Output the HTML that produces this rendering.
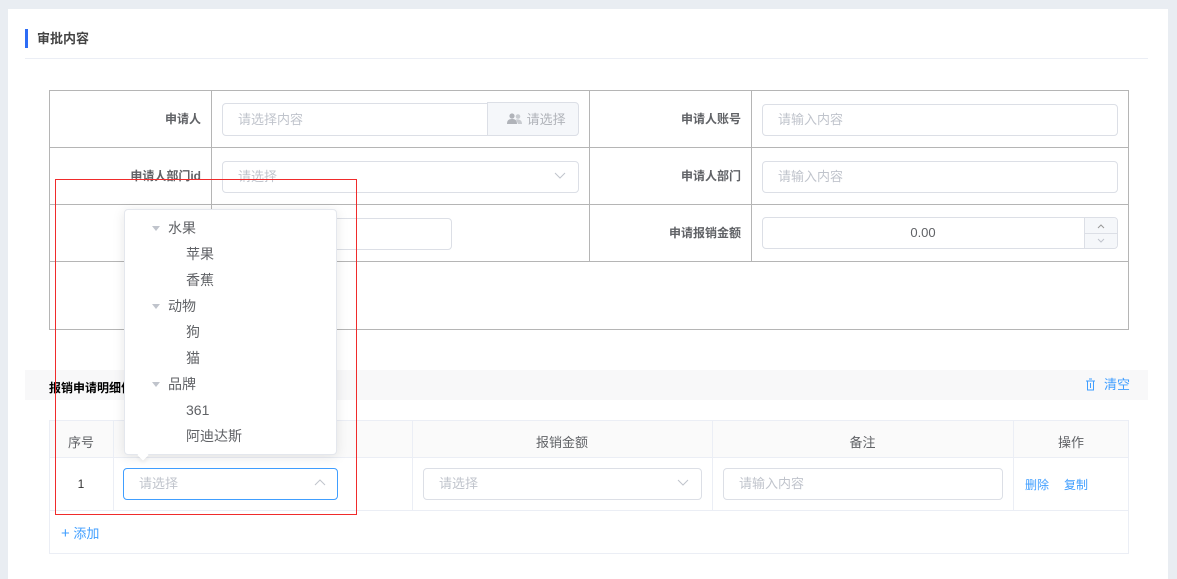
<!DOCTYPE html>
<html><head><meta charset="utf-8"><style>
*{box-sizing:border-box;margin:0;padding:0}
body{width:1177px;height:573px;background:#e9edf2;font-family:"Liberation Sans","Noto Sans CJK SC",sans-serif;position:relative;overflow:hidden;color:#606266}
.a{position:absolute}
.card{left:8px;top:9px;width:1160px;height:570px;background:#fff}
.lbl{font-size:12px;font-weight:bold;color:#606266;text-align:right;line-height:14px}
.inp{border:1px solid #dcdfe6;border-radius:4px;background:#fff;font-size:13px;color:#c0c4cc;padding-left:15px;line-height:29px}
.vl{background:#b5b5b5;width:1px}
.hl{background:#b5b5b5;height:1px}
.tl{background:#ebeef5}
.blue{color:#409eff}
.dd{font-size:14px;color:#606266;line-height:14px}
.tri{width:0;height:0;border-left:4px solid transparent;border-right:4px solid transparent;border-top:5px solid #c0c4cc}
</style></head><body>
<div class="a card"></div>
<div class="a" style="left:25px;top:29px;width:3px;height:19px;background:#2d6cf5"></div>
<div class="a" style="left:37px;top:31px;font-size:13px;line-height:16px;font-weight:bold;color:#444">审批内容</div>
<div class="a" style="left:25px;top:58px;width:1123px;height:1px;background:#ebeef5"></div>

<div class="a" style="left:49px;top:90px;width:1080px;height:240px;border:1px solid #b5b5b5"></div>
<div class="a hl" style="left:49px;top:147px;width:1080px"></div>
<div class="a hl" style="left:49px;top:204px;width:1080px"></div>
<div class="a hl" style="left:49px;top:261px;width:1080px"></div>
<div class="a vl" style="left:211px;top:90px;height:171px"></div>
<div class="a vl" style="left:589px;top:90px;height:171px"></div>
<div class="a vl" style="left:751px;top:90px;height:171px"></div>

<div class="a lbl" style="left:60px;width:141px;top:112px">申请人</div>
<div class="a lbl" style="left:60px;width:141px;top:169px">申请人部门id</div>
<div class="a lbl" style="left:600px;width:141px;top:112px">申请人账号</div>
<div class="a lbl" style="left:600px;width:141px;top:169px">申请人部门</div>
<div class="a lbl" style="left:600px;width:141px;top:226px">申请报销金额</div>

<div class="a inp" style="left:222px;top:103px;width:266px;height:33px;border-radius:4px 0 0 4px;line-height:31px">请选择内容</div>
<div class="a" style="left:487px;top:102px;width:92px;height:34px;background:#f5f7fa;border:1px solid #dcdfe6;border-radius:0 4px 4px 0;font-size:13px;color:#b0b3b9;line-height:33px;padding-left:19px">
<svg width="16" height="12" viewBox="0 0 16 12" style="vertical-align:-1px"><circle cx="5" cy="3" r="2.6" fill="#b0b3b9"/><path d="M0 11c0-4 2-5 5-5s5 1 5 5z" fill="#b0b3b9"/><circle cx="11" cy="3.5" r="2.3" fill="#c8cbd0"/><path d="M9 6.5c3-.5 6 .5 6 4.5h-4z" fill="#c8cbd0"/></svg> 请选择</div>
<div class="a inp" style="left:222px;top:161px;width:357px;height:32px">请选择</div>
<svg class="a" style="left:554px;top:172px" width="12" height="8"><path d="M1 1l5 5 5-5" stroke="#c0c4cc" fill="none"/></svg>
<div class="a inp" style="left:222px;top:218px;width:230px;height:32px"></div>

<div class="a inp" style="left:762px;top:104px;width:356px;height:32px">请输入内容</div>
<div class="a inp" style="left:762px;top:161px;width:356px;height:32px">请输入内容</div>
<div class="a inp" style="left:762px;top:217px;width:356px;height:32px;padding:0;color:#606266;text-align:center;padding-right:34px">0.00</div>
<div class="a" style="left:1084px;top:218px;width:33px;height:30px;background:#f5f7fa;border-left:1px solid #dcdfe6;border-radius:0 4px 4px 0"></div>
<div class="a" style="left:1084px;top:233px;width:33px;height:1px;background:#dcdfe6"></div>
<svg class="a" style="left:1096px;top:222px" width="10" height="24"><path d="M2 6l3-3 3 3" stroke="#999" fill="none"/><path d="M2 17l3 3 3-3" stroke="#c0c4cc" fill="none"/></svg>

<div class="a" style="left:25px;top:370px;width:1123px;height:30px;background:#f8f8f9"></div>
<div class="a" style="left:49px;top:379px;font-size:12px;font-weight:bold;color:#000">报销申请明细信息</div>
<svg class="a" style="left:1085px;top:378px" width="11" height="13"><path d="M1 3h9M4 1h3M2.5 3v9h6V3M5.5 5v5" stroke="#409eff" fill="none"/></svg>
<div class="a blue" style="left:1104px;top:376px;font-size:13px;line-height:18px">清空</div>

<div class="a" style="left:49px;top:420px;width:1080px;height:134px;border:1px solid #ebeef5"></div>
<div class="a" style="left:50px;top:421px;width:1078px;height:36px;background:#fafafa"></div>
<div class="a tl" style="left:49px;top:457px;width:1080px;height:1px"></div>
<div class="a tl" style="left:49px;top:510px;width:1080px;height:1px"></div>
<div class="a tl" style="left:113px;top:420px;width:1px;height:90px"></div>
<div class="a tl" style="left:412px;top:420px;width:1px;height:90px"></div>
<div class="a tl" style="left:712px;top:420px;width:1px;height:90px"></div>
<div class="a tl" style="left:1013px;top:420px;width:1px;height:90px"></div>
<div class="a" style="left:49px;width:64px;top:432px;text-align:center;font-size:13px">序号</div>
<div class="a" style="left:412px;width:300px;top:432px;text-align:center;font-size:13px">报销金额</div>
<div class="a" style="left:712px;width:301px;top:432px;text-align:center;font-size:13px">备注</div>
<div class="a" style="left:1013px;width:116px;top:432px;text-align:center;font-size:13px">操作</div>
<div class="a" style="left:49px;width:64px;top:477px;text-align:center;font-size:12px;color:#333">1</div>
<div class="a inp" style="left:123px;top:468px;width:215px;height:32px;border-color:#409eff">请选择</div>
<svg class="a" style="left:314px;top:479px" width="12" height="8"><path d="M1 6l5-5 5 5" stroke="#c0c4cc" fill="none"/></svg>
<div class="a inp" style="left:423px;top:468px;width:279px;height:32px">请选择</div>
<svg class="a" style="left:677px;top:479px" width="12" height="8"><path d="M1 1l5 5 5-5" stroke="#c0c4cc" fill="none"/></svg>
<div class="a inp" style="left:723px;top:468px;width:280px;height:32px">请输入内容</div>
<div class="a blue" style="left:1025px;top:476px;font-size:12px">删除</div>
<div class="a blue" style="left:1064px;top:476px;font-size:12px">复制</div>
<div class="a blue" style="left:61px;top:523px;font-size:13px;color:#409eff"><span style="font-size:15px">+</span> 添加</div>

<div class="a" style="left:124px;top:209px;width:213px;height:246px;background:#fff;border:1px solid #e4e7ed;border-radius:4px;box-shadow:0 2px 12px rgba(0,0,0,.1)"></div>
<div class="a" style="left:139px;top:451px;width:8px;height:8px;background:#fff;transform:rotate(45deg);box-shadow:2px 2px 3px rgba(0,0,0,.05)"></div>
<div class="a tri" style="left:152px;top:226px"></div>
<div class="a dd" style="left:168px;top:221px">水果</div>
<div class="a dd" style="left:186px;top:247px">苹果</div>
<div class="a dd" style="left:186px;top:273px">香蕉</div>
<div class="a tri" style="left:152px;top:304px"></div>
<div class="a dd" style="left:168px;top:299px">动物</div>
<div class="a dd" style="left:186px;top:325px">狗</div>
<div class="a dd" style="left:186px;top:351px">猫</div>
<div class="a tri" style="left:152px;top:382px"></div>
<div class="a dd" style="left:168px;top:377px">品牌</div>
<div class="a dd" style="left:186px;top:403px">361</div>
<div class="a dd" style="left:186px;top:429px">阿迪达斯</div>

<div class="a" style="left:55px;top:179px;width:302px;height:336px;border:1px solid #f02b2b"></div>
</body></html>
